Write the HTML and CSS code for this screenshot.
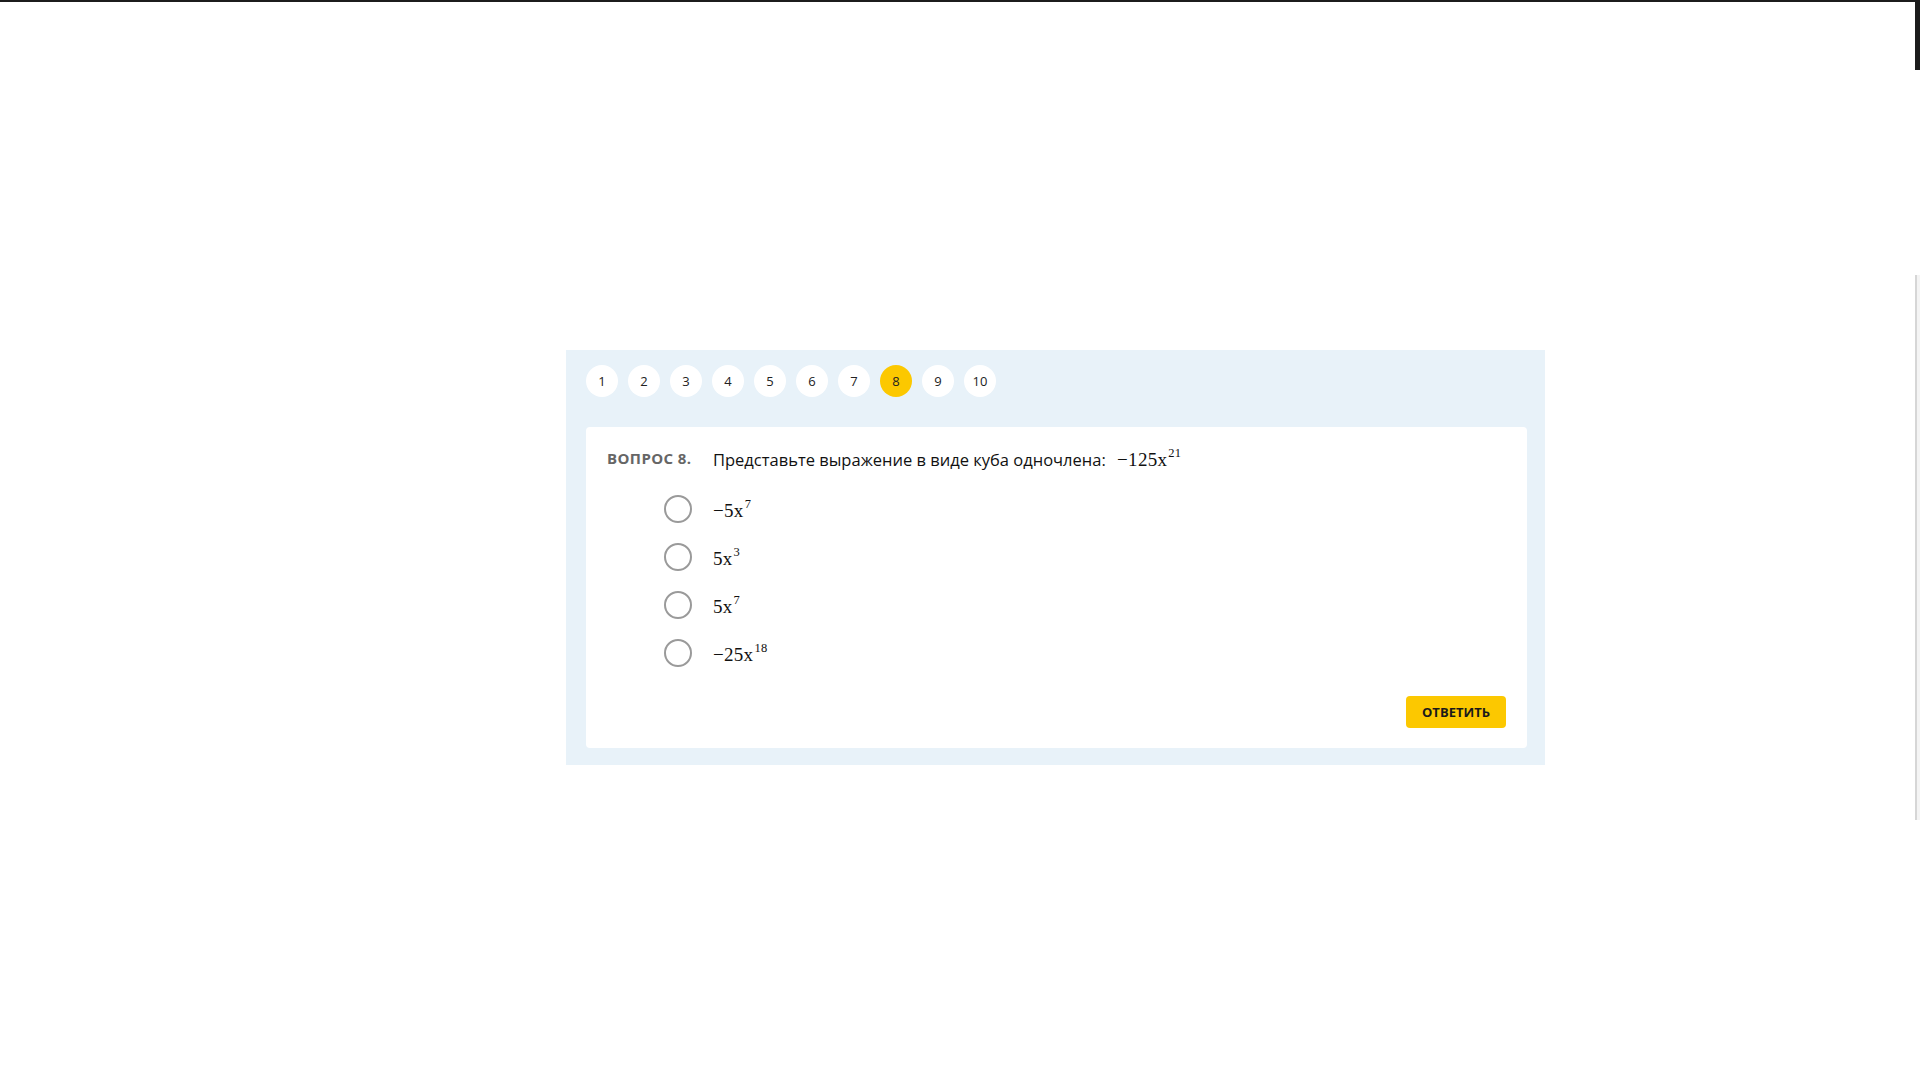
FILE: index.html
```html
<!DOCTYPE html>
<html lang="ru">
<head>
<meta charset="utf-8">
<title>Вопрос 8</title>
<link rel="stylesheet" href="styles.css">
</head>
<body>
<div class="page">
  <section class="panel">
    <nav class="steps">
      <span class="step">1</span>
      <span class="step">2</span>
      <span class="step">3</span>
      <span class="step">4</span>
      <span class="step">5</span>
      <span class="step">6</span>
      <span class="step">7</span>
      <span class="step step-active">8</span>
      <span class="step">9</span>
      <span class="step">10</span>
    </nav>
    <div class="card">
      <div class="question">
        <span class="q-label">Вопрос 8.</span>
        <p class="q-text">Представьте выражение в виде куба одночлена: <span class="math">−125x<sup>21</sup></span></p>
      </div>
      <ul class="options">
        <li class="option"><span class="radio"></span><span class="math">−5x<sup>7</sup></span></li>
        <li class="option"><span class="radio"></span><span class="math">5x<sup>3</sup></span></li>
        <li class="option"><span class="radio"></span><span class="math">5x<sup>7</sup></span></li>
        <li class="option"><span class="radio"></span><span class="math">−25x<sup>18</sup></span></li>
      </ul>
      <div class="actions">
        <button class="btn" type="button">Ответить</button>
      </div>
    </div>
  </section>
</div>
<div class="scrollbar"><div class="scroll-top"></div><div class="scroll-thumb"></div></div>
</body>
</html>
```

FILE: styles.css
```css
html, body {
  margin: 0;
  padding: 0;
  background: #ffffff;
}

body {
  border-top: 2px solid #1c1c1c;
  font-family: "Open Sans", "Noto Sans", sans-serif;
  color: #222;
  min-height: 1078px;
  box-sizing: border-box;
}

.page {
  padding-top: 348px;
  padding-left: 566px;
}

.panel {
  width: 979px;
  box-sizing: border-box;
  background: #e8f2f9;
  padding: 15px 18px 17px 20px;
}

.steps {
  display: flex;
  gap: 10px;
}

.step {
  width: 32px;
  height: 32px;
  border-radius: 50%;
  background: #ffffff;
  display: flex;
  align-items: center;
  justify-content: center;
  font-size: 13px;
  color: #222;
}

.step-active {
  background: #fcc800;
}

.card {
  margin-top: 30px;
  background: #ffffff;
  border-radius: 4px;
  padding: 21px 21px 20px 21px;
}

.question {
  display: flex;
  align-items: flex-start;
}

.q-label {
  width: 106px;
  flex: none;
  font-size: 15px;
  line-height: 20px;
  font-weight: 700;
  text-transform: uppercase;
  letter-spacing: 0.4px;
  color: #666;
}

.q-text {
  margin: 0;
  font-size: 16.5px;
  line-height: 24px;
  color: #111;
}

.math {
  font-family: "Liberation Serif", "Times New Roman", serif;
  font-size: 19px;
  color: #111;
  margin-left: 7px;
  letter-spacing: 0.3px;
}

.math sup {
  font-size: 12.5px;
  vertical-align: 9px;
  line-height: 0;
  margin-left: 1px;
}

.options {
  list-style: none;
  margin: 13px 0 0 57px;
  padding: 0;
}

.option {
  height: 48px;
  display: flex;
  align-items: center;
  gap: 21px;
}

.option .math {
  margin-left: 0;
  position: relative;
  top: 2px;
}

.radio {
  width: 28px;
  height: 28px;
  box-sizing: border-box;
  border: 2px solid #9a9a9a;
  border-radius: 50%;
  flex: none;
}

.actions {
  display: flex;
  justify-content: flex-end;
  margin-top: 19px;
}

.btn {
  width: 100px;
  height: 32px;
  border: none;
  border-radius: 4px;
  background: #fcc800;
  font-family: "Open Sans", "Noto Sans", sans-serif;
  font-weight: 700;
  font-size: 13px;
  text-transform: uppercase;
  color: #1a1a1a;
  padding: 0;
  cursor: pointer;
}

.scrollbar {
  position: fixed;
  top: 0;
  right: 0;
  width: 5px;
  height: 100%;
  display: flex;
  flex-direction: column;
}

.scroll-top {
  height: 70px;
  background: #1c1c1c;
}

.scroll-thumb {
  margin-top: 205px;
  height: 545px;
  border-left: 2px solid #d6d6d6;
  background: #f4f4f4;
}
```
